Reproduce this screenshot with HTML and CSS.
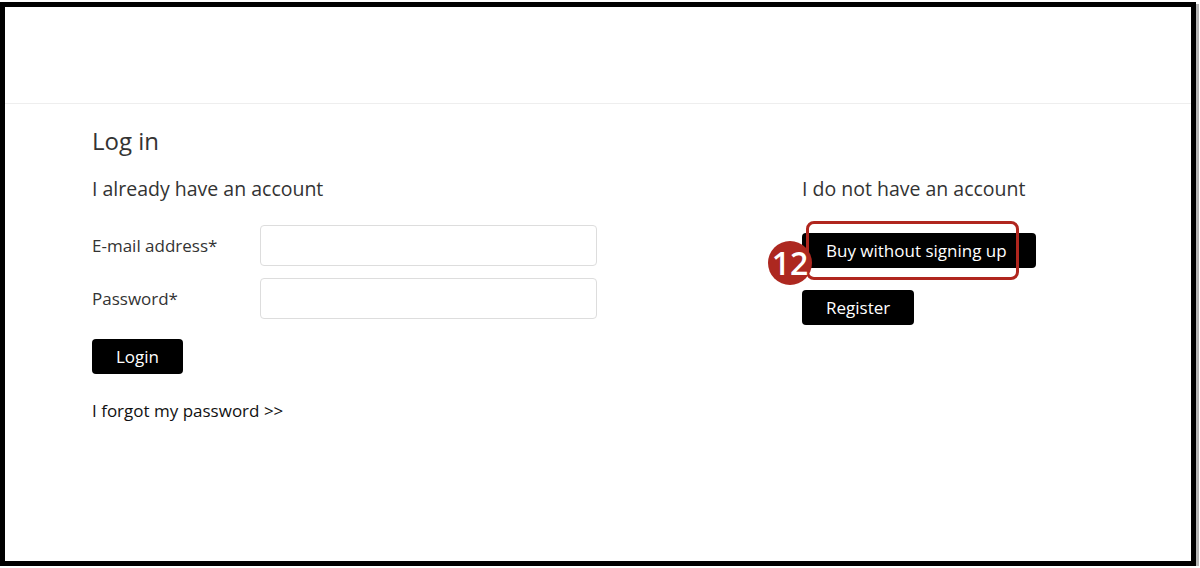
FILE: index.html
```html
<!DOCTYPE html>
<html lang="en">
  <head>
    <meta charset="UTF-8" />
    <title>Log in</title>
    <link rel="stylesheet" href="styles.css">
  </head>
  <body>
    <div class="frame">
      <div class="top-bar"></div>
      <div class="content">
        <h1>Log in</h1>
        <div class="columns">
          <div class="col">
            <h2>I already have an account</h2>
            <form class="login-form">
              <div class="form-group">
                <label for="email">E-mail address*</label>
                <input type="email" id="email" name="email" />
              </div>
              <div class="form-group">
                <label for="password">Password*</label>
                <input type="password" id="password" name="password" />
              </div>
              <button type="submit" class="btn">Login</button>
            </form>
            <a href="#" class="forgot">I forgot my password &gt;&gt;</a>
          </div>
          <div class="col">
            <h2>I do not have an account</h2>
            <div class="guest-wrap">
              <a href="#" class="btn btn-guest">Buy without signing up</a>
              <!-- annotation marker -->
              <span class="callout-box"></span>
              <span class="callout-num">12</span>
            </div>
            <a href="#" class="btn">Register</a>
          </div>
        </div>
      </div>
    </div>
  </body>
</html>
```

FILE: styles.css
```css
body {
  margin: 0;
  font-family: "Open Sans", "Liberation Sans", sans-serif;
  background: #fff;
  color: #333;
}
.frame {
  margin-top: 2px;
  width: 1186px;
  height: 554px;
  border: 5px solid #000;
  box-shadow: 3px 2px 0 #b5b5b5;
  background: #fff;
  overflow: hidden;
}
.top-bar {
  height: 96px;
  border-bottom: 1px solid #eee;
}
.content {
  padding: 21px 0 0 87px;
}
h1 {
  margin: 0;
  font-size: 24px;
  font-weight: 400;
  line-height: 32px;
}
.columns {
  display: grid;
  grid-template-columns: 710px auto;
  margin-top: 19px;
}
h2 {
  margin: 0 0 23px;
  font-size: 19.5px;
  font-weight: 400;
  line-height: 26px;
}
.form-group {
  display: flex;
  align-items: center;
  margin-bottom: 12px;
}
label {
  width: 168px;
  font-size: 17px;
}
input {
  width: 337px;
  height: 41px;
  border: 1px solid #ddd;
  border-radius: 4px;
  box-sizing: border-box;
}
.btn {
  display: inline-block;
  background: #000;
  color: #fff;
  border: none;
  border-radius: 4px;
  font-family: inherit;
  font-size: 17px;
  line-height: 35px;
  padding: 0 24px;
  text-decoration: none;
  cursor: pointer;
}
.btn-guest {
  padding-right: 29px;
}
.login-form .btn {
  margin-top: 8px;
}
.forgot {
  display: block;
  margin-top: 25px;
  color: #111;
  font-size: 17px;
  text-decoration: none;
}
.guest-wrap {
  position: relative;
  padding-top: 8px;
  margin-bottom: 22px;
}
.callout-box {
  position: absolute;
  left: 4px;
  top: -4px;
  width: 207px;
  height: 53px;
  border: 3px solid #b0261e;
  border-radius: 8px;
}
.callout-num {
  position: absolute;
  left: -34px;
  top: 16px;
  width: 44px;
  height: 44px;
  border-radius: 50%;
  background: #ad2820;
  color: #fff;
  font-size: 32px;
  font-weight: 600;
  line-height: 44px;
  text-align: center;
}
```
